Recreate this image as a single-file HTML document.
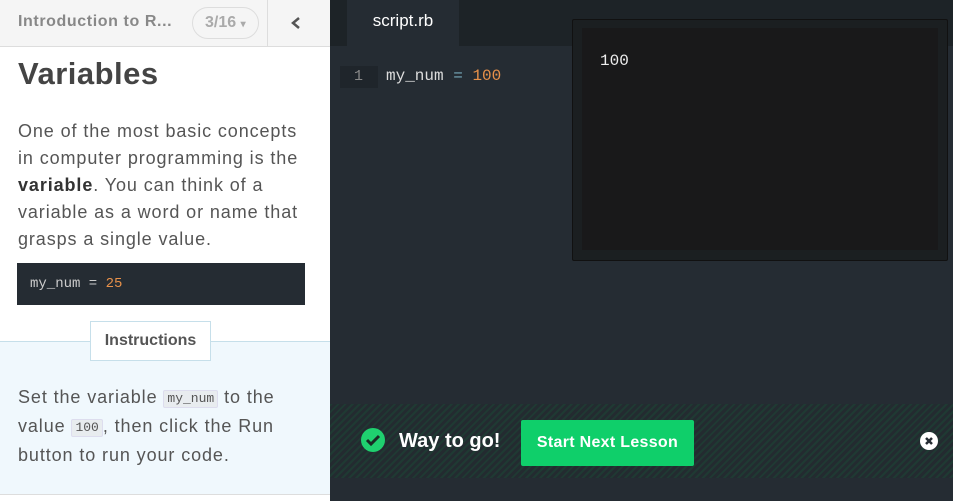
<!DOCTYPE html>
<html><head><meta charset="utf-8"><style>
*{margin:0;padding:0;box-sizing:border-box}
body{width:953px;height:501px;overflow:hidden;position:relative;font-family:"Liberation Sans",sans-serif;background:#252c33}
#left{position:absolute;left:0;top:0;width:330px;height:501px;background:#fff}
#hdr{position:absolute;left:0;top:0;width:330px;height:47px;background:#f5f5f5;border-bottom:1px solid #ddd}
#hdr .t{position:absolute;left:18px;top:13px;font-size:16px;font-weight:bold;color:#888;letter-spacing:0.6px}
#hdr .pill{position:absolute;left:192px;top:7px;width:67px;height:32px;border:1px solid #ddd;border-radius:16px;color:#aaa;font-size:16px;font-weight:bold;padding:6px 0 0 12px}
#hdr .sep{position:absolute;left:267px;top:0;width:1px;height:46px;background:#ddd}
#hdr .chev{position:absolute;left:290px;top:16px}
h1{position:absolute;left:18px;top:56px;font-size:31px;color:#444;font-weight:bold;letter-spacing:0.5px}
.p{position:absolute;left:18px;font-size:18px;line-height:27px;color:#555;letter-spacing:0.9px;white-space:nowrap}
.code{position:absolute;left:17px;top:263px;width:288px;height:42px;background:#252c33;font-family:"Liberation Mono",monospace;font-size:14px;color:#ccc;padding:13px 0 0 13px}
#instr{position:absolute;left:0;top:341px;width:330px;height:154px;background:#f0f8fd;border-top:1px solid #c6dfea;border-bottom:1px solid #ddd}
.tab{position:absolute;left:90px;top:321px;width:121px;height:40px;background:#fff;border:1px solid #c6dfea;font-weight:bold;font-size:16px;color:#555;text-align:center;padding-top:10px}
.ic{font-family:"Liberation Mono",monospace;font-size:13px;background:#e8ecef;border:1px solid #dde;border-radius:2px;padding:1px 3px;color:#555;letter-spacing:0;line-height:14px;display:inline-block;vertical-align:1px}
#tabs{position:absolute;left:330px;top:0;width:623px;height:46px;background:#1d2327}
#tabs .s{position:absolute;left:17px;top:0;width:112px;height:46px;background:#252c33;color:#fff;font-size:17px;text-align:center;padding-top:11px}
.gut{position:absolute;left:340px;top:66px;width:38px;height:22px;background:#1f252b;color:#888;font-family:"Liberation Mono",monospace;font-size:15px;padding:2px 0 0 14px}
.ln{position:absolute;left:386px;top:67px;font-family:"Liberation Mono",monospace;font-size:16px;color:#ddd}
#out{position:absolute;left:572px;top:19px;width:376px;height:242px;background:#1b1f21;border:1px solid #111;border-radius:2px}
#out .in{position:absolute;left:9px;top:8px;width:356px;height:222px;background:#19191a;color:#eee;font-family:"Liberation Mono",monospace;font-size:16px;padding:24px 0 0 18px}
#ban{position:absolute;left:330px;top:404px;width:623px;height:74px;background:repeating-linear-gradient(135deg,#1f3a33 0 2px,#232b30 2px 5px)}
.chk{position:absolute;left:361px;top:428px}
.way{position:absolute;left:399px;top:430px;color:#fff;font-size:20px;font-weight:bold}
.btn{position:absolute;left:521px;top:420px;width:173px;height:46px;background:#0fcf6a;color:#fff;font-weight:bold;font-size:16px;text-align:center;padding-top:14px;border-radius:2px;letter-spacing:0.3px}
.x{position:absolute;left:920px;top:432px}
</style></head><body>
<div id="left">
<div id="hdr"><div class="t">Introduction to R...</div><div class="pill">3/16 <span style="font-size:10px">▾</span></div><div class="sep"></div>
<svg class="chev" width="12" height="14" viewBox="0 0 12 14"><path d="M9 2L3 7l6 5" stroke="#555" stroke-width="2.5" fill="none"/></svg></div>
<h1>Variables</h1>
<div class="p" style="top:118px">One of the most basic concepts<br>in computer programming is the<br><b style="color:#333">variable</b>. You can think of a<br>variable as a word or name that<br>grasps a single value.</div>
<div class="code">my_num = <span style="color:#e8914a">25</span></div>
<div id="instr"><div class="p" style="top:41px;line-height:29px">Set the variable <span class="ic">my_num</span> to the<br>value <span class="ic">100</span>, then click the Run<br>button to run your code.</div></div>
<div class="tab">Instructions</div>
</div>
<div id="tabs"><div class="s">script.rb</div></div>
<div class="gut">1</div>
<div class="ln">my_num <span style="color:#7ab">=</span> <span style="color:#e8914a">100</span></div>
<div id="out"><div class="in">100</div></div>
<div id="ban"></div>
<svg class="chk" width="24" height="24" viewBox="0 0 24 24"><circle cx="12" cy="12" r="12" fill="#1fd06f"/><path d="M6 12l4 4 8-8" stroke="#1a2a25" stroke-width="3" fill="none"/></svg>
<div class="way">Way to go!</div>
<div class="btn">Start Next Lesson</div>
<svg class="x" width="18" height="18" viewBox="0 0 18 18"><circle cx="9" cy="9" r="9" fill="#fff"/><path d="M6 6l6 6M12 6l-6 6" stroke="#252c33" stroke-width="2.5"/></svg>
</body></html>
